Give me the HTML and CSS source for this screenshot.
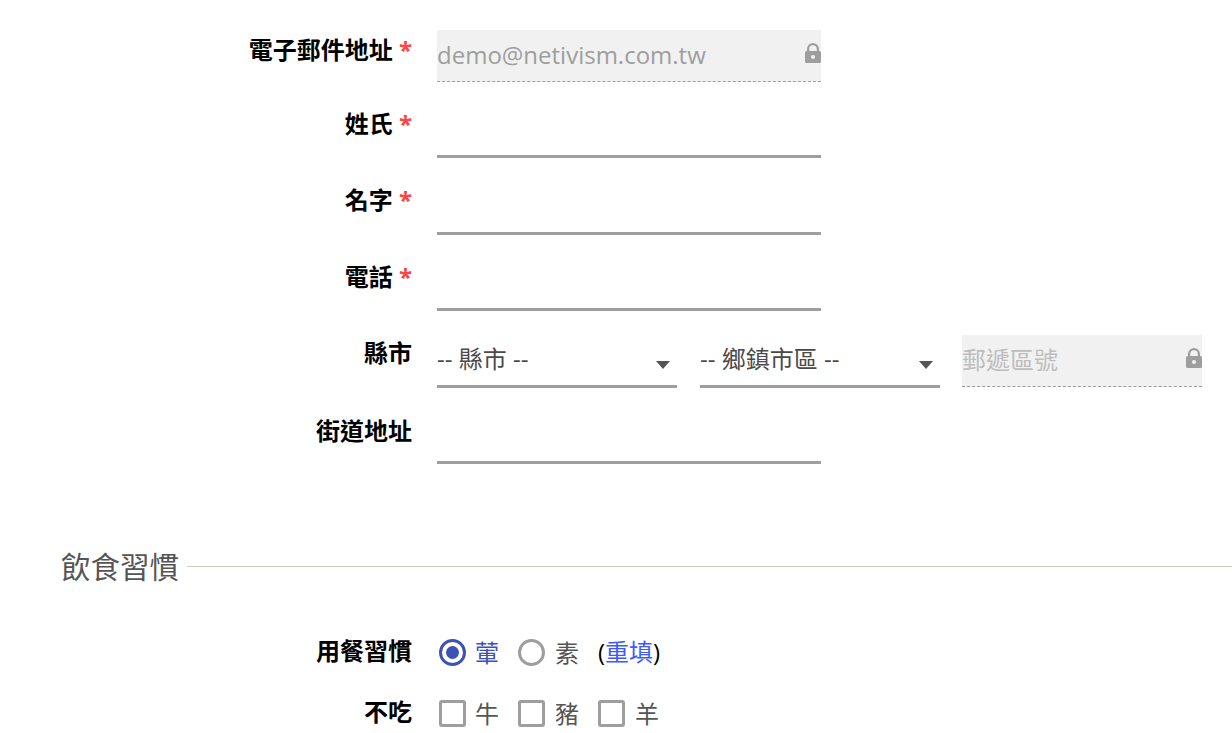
FILE: index.html
```html
<!DOCTYPE html>
<html lang="zh-Hant">
<head>
<meta charset="utf-8">
<title>表單</title>
<link rel="stylesheet" href="styles.css">
</head>
<body>
<svg class="defs" width="0" height="0" aria-hidden="true"><symbol id="lock" viewBox="0 0 16 20"><path fill="currentColor" d="M2 8V6a6 6 0 0 1 12 0v2h.5A1.5 1.5 0 0 1 16 9.500v9a1.500 1.500 0 0 1-1.500 1.500h-13A1.500 1.500 0 0 1 0 18.500v-9A1.500 1.500 0 0 1 1.500 8H2zm2.200 0h7.600V6a3.800 3.800 0 0 0-7.600 0v2zM8 12a2 2 0 1 0 0 4 2 2 0 0 0 0-4z" fill-rule="evenodd"/></symbol></svg>
<main class="page">
  <form class="form">
    <div class="row row-email">
      <label class="label">電子郵件地址 <span class="req">*</span></label>
      <div class="field locked wide"><span class="val">demo@netivism.com.tw</span><svg class="lock"><use href="#lock"/></svg></div>
    </div>
    <div class="row">
      <label class="label">姓氏 <span class="req">*</span></label>
      <div class="field wide"></div>
    </div>
    <div class="row">
      <label class="label">名字 <span class="req">*</span></label>
      <div class="field wide"></div>
    </div>
    <div class="row">
      <label class="label">電話 <span class="req">*</span></label>
      <div class="field wide"></div>
    </div>
    <div class="row">
      <label class="label">縣市</label>
      <div class="addr">
        <div class="field select"><span class="opt">-- 縣市 --</span><i class="caret"></i></div>
        <div class="field select"><span class="opt">-- 鄉鎮市區 --</span><i class="caret"></i></div>
        <div class="field locked zip"><span class="ph">郵遞區號</span><svg class="lock"><use href="#lock"/></svg></div>
      </div>
    </div>
    <div class="row row-street">
      <label class="label">街道地址</label>
      <div class="field wide"></div>
    </div>

    <h2 class="legend"><span>飲食習慣</span></h2>

    <div class="row choice first">
      <label class="label">用餐習慣</label>
      <div class="options">
        <span class="opt-item on"><i class="radio on"></i><span>葷</span></span>
        <span class="opt-item"><i class="radio"></i><span>素</span></span>
        <span class="reset">(<a href="#">重填</a>)</span>
      </div>
    </div>
    <div class="row choice">
      <label class="label">不吃</label>
      <div class="options">
        <span class="opt-item"><i class="check"></i><span>牛</span></span>
        <span class="opt-item"><i class="check"></i><span>豬</span></span>
        <span class="opt-item"><i class="check"></i><span>羊</span></span>
      </div>
    </div>
  </form>
</main>
</body>
</html>
```
FILE: styles.css
```css
* { box-sizing: border-box; }
html, body { margin: 0; height: 733px; overflow: hidden; background: #fff; }
body { font-family: "Open Sans", "Noto Sans CJK TC", sans-serif; color: #000; }
.defs { position: absolute; }
.page { padding-top: 30px; }
.row { display: grid; grid-template-columns: 412px 1fr; column-gap: 25px; height: 76.5px; align-items: start; }
.label { font-size: 24px; font-weight: 700; line-height: 34px; text-align: right; white-space: nowrap; }
.row-email .label { margin-top: 3px; }
.row-street .label { margin-top: 1px; }
.choice .label { line-height: 32px; }
.req { color: #f44; }
.field { height: 51.5px; display: flex; align-items: center; position: relative; border-bottom: 3px solid #9e9e9e; }
.wide { width: 384px; }
.locked { background: #f1f1f1; border-bottom: 1px dashed #9e9e9e; padding-bottom: 2px; }
.val { font-size: 24px; color: #9e9e9e; white-space: nowrap; }
.lock { position: absolute; right: 0; top: 13px; width: 16px; height: 20px; color: #9e9e9e; }
.addr { display: flex; gap: 23px; }
.select { width: 240px; padding-bottom: 6px; }
.opt { font-size: 24px; color: #4a4a4a; white-space: nowrap; }
.caret { position: absolute; right: 7px; top: 25px; border: 7px solid transparent; border-top: 8px solid #555; border-bottom: 0; }
.zip { width: 240px; height: 52px; margin: -1px 0 0 -1px; padding-bottom: 4px; }
.ph { font-size: 24px; color: #bdbdbd; white-space: nowrap; }
.legend { margin: 53px 0 0; height: 48px; display: flex; align-items: center; padding-left: 61px; font-size: 29.500px; font-weight: 400; color: #555; }
.legend span { margin-top: -2px; }
.legend::after { content: ""; flex: 1; height: 1px; background: #cfcfbf; margin-left: 8px; }
.choice { height: 61px; }
.first { margin-top: 44.500px; }
.options { display: flex; align-items: center; height: 36px; padding-left: 2px; font-size: 24px; color: #555; }
.opt-item { display: flex; align-items: center; width: 80px; }
.opt-item:first-child { width: 79px; }
.opt-item.on { color: #3f51b5; }
.opt-item span { margin: -2px 0 0 10px; }
.opt-item:first-child span { margin-left: 9px; }
.radio { width: 27px; height: 27px; border-radius: 50%; border: 3px solid #9e9e9e; display: block; position: relative; flex: none; }
.radio.on { border-color: #3f51b5; }
.radio.on::after { content: ""; position: absolute; inset: 3.750px; border-radius: 50%; background: #3f51b5; }
.check { width: 27px; height: 27px; border-radius: 3px; border: 3px solid #9e9e9e; display: block; flex: none; }
.reset { color: #000; margin-top: -4px; }
.reset a { color: #3d5afe; text-decoration: none; }
```
